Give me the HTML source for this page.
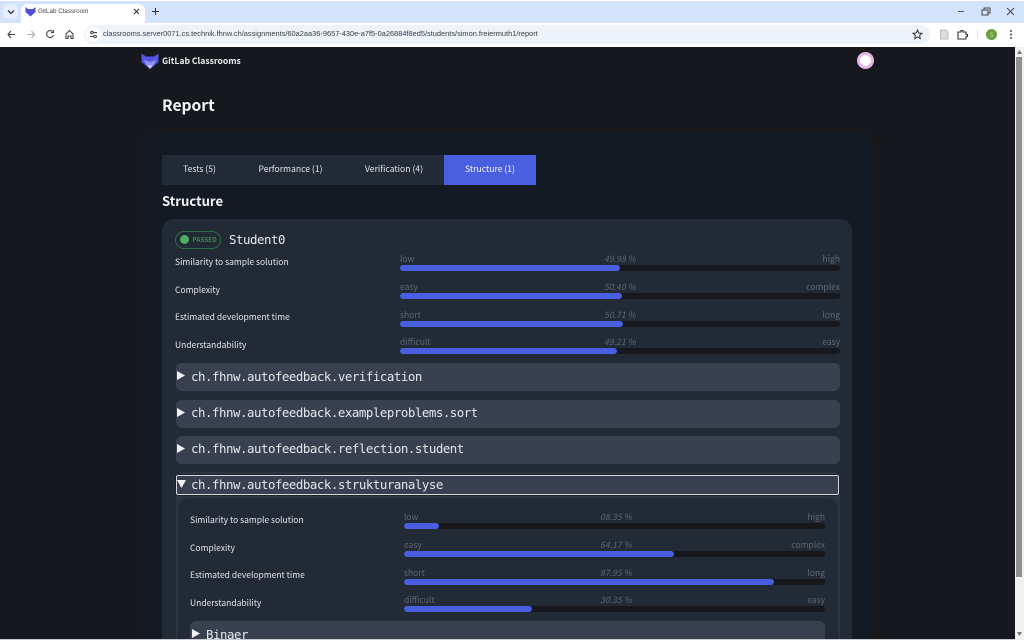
<!DOCTYPE html>
<html><head><meta charset="utf-8"><title>GitLab Classroom</title>
<style>
html,body{margin:0;padding:0;width:1024px;height:640px;overflow:hidden;background:#16181d}
body{position:relative;font-family:"Noto Sans CJK SC","Liberation Sans",sans-serif;color:#e5e7eb}
div,span,svg{position:absolute;white-space:nowrap}
.mono{font-family:"DejaVu Sans Mono","Liberation Mono",monospace}
.lab{font-size:8.5px;line-height:12px;color:#e5e7eb}
.sm{font-size:8.5px;line-height:12px;color:#5f6672}
.pc{font-size:8.7px;line-height:12px;color:#5f6672;font-style:italic}
.track{height:6px;background:#16181d;border-radius:3px}
.fill{left:0;top:0;height:6px;background:#4a5fe0;border-radius:3px}
.acc{background:#394150;border-radius:6px;height:28px}
.acct{font-size:12.4px;letter-spacing:-0.465px;line-height:14px;color:#e5e7eb}
.tab{top:155px;height:30px;line-height:29px;font-size:8.6px;text-align:center;color:#e5e7eb}
</style></head><body>
<!-- browser chrome -->
<div style="left:0;top:0;width:1024px;height:23px;background:#d3e3fd"></div>
<div style="left:0;top:0;width:1024px;height:1px;background:#fff"></div>
<div style="left:3px;top:4px;width:15px;height:15px;background:#e6eeff;border-radius:5px"></div>
<svg style="left:7px;top:9px" width="8" height="6" viewBox="0 0 8 6"><path d="M1 1.500 4 4.500 7 1.500" fill="none" stroke="#333" stroke-width="1.300"/></svg>
<div style="left:21px;top:4px;width:124px;height:19px;background:#fff;border-radius:7px 7px 0 0"></div>
<svg style="left:25px;top:6px" width="11" height="11" viewBox="0 0 11 11"><path d="M0.500 1 3 3 8 3 10.500 1 10.500 6 5.500 10.500 0.500 6Z" fill="#4f50d8"/></svg>
<div style="left:38px;top:6px;font-size:6.3px;line-height:11px;color:#444;font-family:'Liberation Sans',sans-serif">GitLab Classroom</div>
<svg style="left:133px;top:8px" width="7" height="7" viewBox="0 0 7 7"><path d="M1 1 6 6M6 1 1 6" stroke="#333" stroke-width="1.100"/></svg>
<svg style="left:151px;top:7px" width="9" height="9" viewBox="0 0 9 9"><path d="M4.500 1V8M1 4.500H8" stroke="#333" stroke-width="1"/></svg>
<svg style="left:956px;top:7px" width="60" height="9" viewBox="0 0 60 9"><path d="M2 4.500H8" stroke="#555"/><path d="M26 3H32V8H26ZM28 3V1H34V6H32" fill="none" stroke="#444"/><path d="M51 1 58 8M58 1 51 8" stroke="#444"/></svg>
<div style="left:0;top:23px;width:1024px;height:24px;background:#fff"></div>
<svg style="left:7px;top:29px" width="70" height="11" viewBox="0 0 70 11"><path d="M8 5.500H1M4 2 1 5.500 4 9" fill="none" stroke="#444" stroke-width="1.100"/><path d="M20.500 5.500H27.500M24.500 2 27.500 5.500 24.500 9" fill="none" stroke="#aaa" stroke-width="1.100"/><path d="M45.500 2.500A3.500 3.500 0 1 0 46.500 6M46.500 1V3.500H44" fill="none" stroke="#444" stroke-width="1.100"/><path d="M59 5 62.500 1.500 66 5V9.500H64V7H61V9.500H59Z" fill="none" stroke="#444" stroke-width="1.100"/></svg>
<div style="left:84px;top:25px;width:846px;height:19px;background:#edf2fb;border-radius:10px"></div>
<div style="left:86px;top:27px;width:15px;height:15px;background:#fff;border-radius:8px"></div>
<svg style="left:89px;top:30px" width="9" height="9" viewBox="0 0 9 9"><path d="M1 2.500H8M1 6.500H8" stroke="#444" stroke-width="1"/><circle cx="3" cy="2.500" r="1.300" fill="#fff" stroke="#444"/><circle cx="6" cy="6.500" r="1.300" fill="#fff" stroke="#444"/></svg>
<div style="left:103px;top:28px;font-size:7.41px;line-height:12px;color:#3c4043;font-family:'Liberation Sans',sans-serif">classrooms.server0071.cs.technik.fhnw.ch/assignments/60a2aa36-9657-430e-a7f5-0a26884f8ed5/students/simon.freiermuth1/report</div>
<svg style="left:912px;top:29px" width="11" height="11" viewBox="0 0 11 11"><path d="M5.500 1 6.800 4 10 4.300 7.600 6.400 8.300 9.600 5.500 8 2.700 9.600 3.400 6.400 1 4.300 4.200 4Z" fill="none" stroke="#333" stroke-width="1"/></svg>
<svg style="left:939px;top:29px" width="30" height="11" viewBox="0 0 30 11"><path d="M1.500 1H7L9 3V10H1.500Z" fill="#ddd" stroke="#aaa" stroke-width=".7"/><path d="M19 3H22V1.500H24V3H27V5.500H28.500V7.500H27V10H19Z" fill="none" stroke="#333" stroke-width="1.100"/></svg>
<div style="left:977px;top:30px;width:1px;height:9px;background:#d5e0f5"></div>
<div style="left:986px;top:29px;width:11px;height:11px;border-radius:50%;background:#6e9f3f;color:#cfe5b5;font-size:6px;line-height:11px;text-align:center">S</div>
<svg style="left:1009px;top:30px" width="4" height="9" viewBox="0 0 4 9"><circle cx="2" cy="1" r="1" fill="#444"/><circle cx="2" cy="4.500" r="1" fill="#444"/><circle cx="2" cy="8" r="1" fill="#444"/></svg>

<!-- scrollbar -->
<div style="left:1015px;top:47px;width:9px;height:593px;background:#f1f1f1"></div>
<div style="left:1016px;top:57px;width:6px;height:520px;background:#8f8f8f"></div>
<svg style="left:1015px;top:49px" width="9" height="6" viewBox="0 0 9 6"><path d="M2 5 4.500 1 7 5Z" fill="#777"/></svg>
<svg style="left:1015px;top:631px" width="9" height="6" viewBox="0 0 9 6"><path d="M2 1 4.500 5 7 1Z" fill="#777"/></svg>

<!-- header -->
<svg style="left:141px;top:53px" width="18" height="17" viewBox="0 0 18 17"><path d="M0.500 0.500 5 3.500H13L17.500 0.500V9L14 12 9 16.500 4 12 0.500 9Z" fill="#5256e0"/><path d="M3 7 9 9 15 7 12.500 12.500H5.500Z" fill="#8f92f0"/><path d="M6.500 12.500 9 15.500 11.500 12.500Z" fill="#e0e2ff"/></svg>
<div style="left:162px;top:54px;font-size:8.6px;font-weight:700;line-height:14px;color:#e9ebef">GitLab Classrooms</div>
<div style="left:857px;top:51.500px;width:17px;height:17px;border-radius:50%;background:#e8b4e6"></div>
<svg style="left:860px;top:54.500px" width="11" height="11" viewBox="0 0 11 11"><path d="M3 0H8L8 1.500 9.500 1.500 9.500 3 11 3V8L9.500 8 9.500 9.500 8 9.500 8 11H3L3 9.500 1.500 9.500 1.500 8 0 8V3L1.500 3 1.500 1.500 3 1.500Z" fill="#fff"/></svg>
<div style="left:162px;top:95px;font-size:15.6px;font-weight:700;line-height:21px;color:#f3f4f6">Report</div>

<!-- main panel -->
<div style="left:140px;top:133px;width:733px;height:520px;background:#141a23;border-radius:14px"></div>

<!-- tabs -->
<div style="left:162px;top:155px;width:374px;height:30px;background:#222a36"></div>
<div class="tab" style="left:162px;width:75px">Tests (5)</div>
<div class="tab" style="left:237px;width:107px">Performance (1)</div>
<div class="tab" style="left:344px;width:100px">Verification (4)</div>
<div class="tab" style="left:444px;width:92px;background:#4a5fe0;color:#f3f4f6">Structure (1)</div>
<div style="left:162px;top:192px;font-size:13.1px;font-weight:700;line-height:17px;color:#f3f4f6">Structure</div>

<!-- card -->
<div style="left:162px;top:219px;width:690px;height:440px;background:#222a36;border-radius:12px"></div>
<div style="left:175px;top:231px;width:44px;height:16px;border:1px solid #2f6b45;border-radius:9px"></div>
<div style="left:180px;top:235px;width:9px;height:9px;border-radius:50%;background:#4caf62"></div>
<div style="left:192.500px;top:234px;font-size:6.500px;line-height:11px;font-weight:500;color:#3f9a58">PASSED</div>
<div class="mono acct" style="left:229px;top:233px;color:#e9ebef">Student0</div>

<div class="lab" style="left:175px;top:256px">Similarity to sample solution</div>
<div class="sm" style="left:400px;top:253px">low</div><div class="pc" style="left:604px;top:253px">49.98 %</div><div class="sm" style="right:184px;top:253px">high</div>
<div class="track" style="left:400px;top:265px;width:440px"><div class="fill" style="width:220px"></div></div>

<div class="lab" style="left:175px;top:284px">Complexity</div>
<div class="sm" style="left:400px;top:281px">easy</div><div class="pc" style="left:604px;top:281px">50.40 %</div><div class="sm" style="right:184px;top:281px">complex</div>
<div class="track" style="left:400px;top:293px;width:440px"><div class="fill" style="width:221.500px"></div></div>

<div class="lab" style="left:175px;top:311px">Estimated development time</div>
<div class="sm" style="left:400px;top:309px">short</div><div class="pc" style="left:604px;top:309px">50.71 %</div><div class="sm" style="right:184px;top:309px">long</div>
<div class="track" style="left:400px;top:321px;width:440px"><div class="fill" style="width:223px"></div></div>

<div class="lab" style="left:175px;top:339px">Understandability</div>
<div class="sm" style="left:400px;top:336px">difficult</div><div class="pc" style="left:604px;top:336px">49.21 %</div><div class="sm" style="right:184px;top:336px">easy</div>
<div class="track" style="left:400px;top:348px;width:440px"><div class="fill" style="width:216.500px"></div></div>

<!-- accordions -->
<div class="acc" style="left:176px;top:363px;width:664px"></div>
<svg style="left:177px;top:371px" width="8" height="9" viewBox="0 0 8 9"><path d="M0 0 8 4.500 0 9Z" fill="#f3f4f6"/></svg>
<div class="mono acct" style="left:191px;top:370px">ch.fhnw.autofeedback.verification</div>
<div class="acc" style="left:176px;top:400px;width:664px"></div>
<svg style="left:177px;top:408px" width="8" height="9" viewBox="0 0 8 9"><path d="M0 0 8 4.500 0 9Z" fill="#f3f4f6"/></svg>
<div class="mono acct" style="left:191px;top:406px">ch.fhnw.autofeedback.exampleproblems.sort</div>
<div class="acc" style="left:176px;top:436px;width:664px"></div>
<svg style="left:177px;top:444px" width="8" height="9" viewBox="0 0 8 9"><path d="M0 0 8 4.500 0 9Z" fill="#f3f4f6"/></svg>
<div class="mono acct" style="left:191px;top:442px">ch.fhnw.autofeedback.reflection.student</div>

<!-- open section -->
<div style="left:176px;top:472px;width:664px;height:180px;background:#2d3543;border-radius:6px"></div>
<div style="left:176px;top:475px;width:661px;height:18px;background:#394150;border:1px solid #d5d7da;border-radius:2px;box-shadow:0 0 0 .5px #111"></div>
<svg style="left:177px;top:480px" width="9" height="8" viewBox="0 0 9 8"><path d="M0 0 9 0 4.500 8Z" fill="#f3f4f6"/></svg>
<div class="mono acct" style="left:191px;top:478px">ch.fhnw.autofeedback.strukturanalyse</div>
<div style="left:178px;top:498px;width:660px;height:160px;background:#222a36;border-radius:12px"></div>

<div class="lab" style="left:190px;top:514px">Similarity to sample solution</div>
<div class="sm" style="left:404px;top:511px">low</div><div class="pc" style="left:600px;top:511px">08.35 %</div><div class="sm" style="right:199px;top:511px">high</div>
<div class="track" style="left:404px;top:523px;width:421px"><div class="fill" style="width:35px"></div></div>

<div class="lab" style="left:190px;top:542px">Complexity</div>
<div class="sm" style="left:404px;top:539px">easy</div><div class="pc" style="left:600px;top:539px">64.17 %</div><div class="sm" style="right:199px;top:539px">complex</div>
<div class="track" style="left:404px;top:551px;width:421px"><div class="fill" style="width:270px"></div></div>

<div class="lab" style="left:190px;top:569px">Estimated development time</div>
<div class="sm" style="left:404px;top:567px">short</div><div class="pc" style="left:600px;top:567px">87.95 %</div><div class="sm" style="right:199px;top:567px">long</div>
<div class="track" style="left:404px;top:579px;width:421px"><div class="fill" style="width:370px"></div></div>

<div class="lab" style="left:190px;top:597px">Understandability</div>
<div class="sm" style="left:404px;top:594px">difficult</div><div class="pc" style="left:600px;top:594px">30.35 %</div><div class="sm" style="right:199px;top:594px">easy</div>
<div class="track" style="left:404px;top:606px;width:421px"><div class="fill" style="width:128px"></div></div>

<div class="acc" style="left:190px;top:621px;width:635px"></div>
<svg style="left:192px;top:629px" width="8" height="9" viewBox="0 0 8 9"><path d="M0 0 8 4.500 0 9Z" fill="#f3f4f6"/></svg>
<div class="mono acct" style="left:206px;top:628px">Binaer</div>
<div style="left:0;top:639px;width:1015px;height:1px;background:#c9ccd1"></div>
</body></html>
